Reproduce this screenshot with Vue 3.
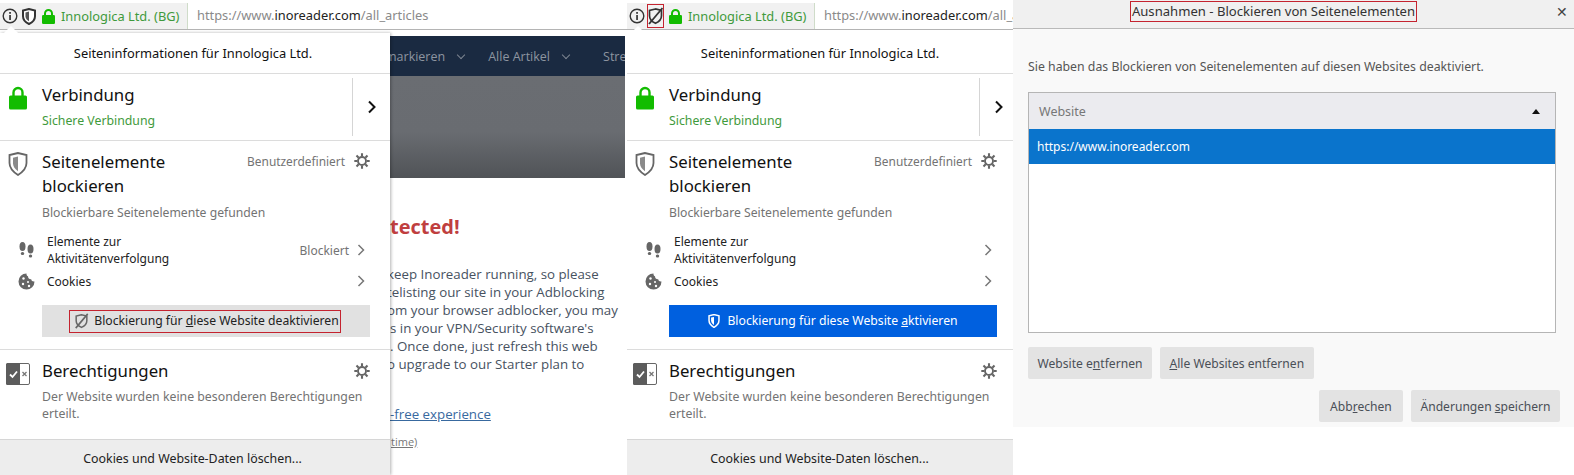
<template>
  <div class="shot">
    <div v-for="pane in panes" :key="pane.id" class="pane" :class="`pane--${pane.id}`">
      <div class="urlbar">
        <div class="identity">
          <svg class="ico-info" width="16" height="16" viewBox="0 0 16 16">
            <circle cx="8" cy="8" r="6.8" fill="none" stroke="#333" stroke-width="1.4" />
            <rect x="7.2" y="7" width="1.7" height="5" fill="#333" />
            <rect x="7.2" y="4" width="1.7" height="1.8" fill="#333" />
          </svg>
          <span class="shield-slot" :class="{ 'shield-slot--marked': !pane.blocking }">
            <svg v-if="pane.blocking" width="14" height="17" viewBox="0 0 14 17">
              <path d="M7 1 1 2.6v5.6c0 3.6 2.6 6.2 6 7.8 3.4-1.600 6-4.200 6-7.800V2.600L7 1Z" fill="#fff" stroke="#333" stroke-width="2" />
              <path d="M7 3.500 3.500 4.500v3.700c0 2.200 1.500 3.900 3.500 5V3.500Z" fill="#555" />
            </svg>
            <svg v-else width="15" height="18" viewBox="0 0 15 18">
              <path d="M7.500 2 1.500 3.500v5.200c0 3.500 2.600 6 6 7.500 3.400-1.500 6-4 6-7.500V3.500L7.500 2Z" fill="none" stroke="#333" stroke-width="1.700" />
              <path d="M14.500 1 1 17" stroke="#333" stroke-width="1.800" />
            </svg>
          </span>
          <svg class="ico-lock" width="13" height="15" viewBox="0 0 13 15">
            <path d="M3 7V4.500a3.500 3.500 0 0 1 7 0V7" fill="none" stroke="#12bc00" stroke-width="2" />
            <rect y="6" width="13" height="9" rx="1.200" fill="#12bc00" />
          </svg>
          <span class="identity__name">Innologica Ltd. (BG)</span>
        </div>
        <div class="url">https://www.<b>inoreader.com</b>/all_articles</div>
      </div>

      <div v-if="pane.id === 'a'" class="site">
        <nav class="site__nav">
          <span>markieren</span><i class="caret"></i>
          <span>Alle Artikel</span><i class="caret caret--last"></i>
          <span>Streams</span>
        </nav>
        <div class="site__hero"></div>
        <h2 class="site__title">tected!</h2>
        <p v-for="line in siteLines" :key="line.text" class="site__line" :style="{ marginLeft: line.x + 'px' }">{{ line.text }}</p>
        <a class="site__link">-free experience</a>
        <a class="site__small">time)</a>
      </div>

      <section class="popup">
        <header class="popup__head">Seiteninformationen für Innologica Ltd.</header>

        <div class="conn">
          <svg class="conn__lock" width="18" height="24" viewBox="0 0 18 24">
            <path d="M4.500 11V6.500a4.500 4.500 0 0 1 9 0V11" fill="none" stroke="#12bc00" stroke-width="2.400" />
            <rect y="9.500" width="18" height="14" rx="1.600" fill="#12bc00" />
          </svg>
          <div class="conn__text">
            <div class="title">Verbindung</div>
            <div class="conn__state">Sichere Verbindung</div>
          </div>
          <div class="conn__more">
            <svg width="10" height="14" viewBox="0 0 10 14"><path d="M2 1.500 7.500 7 2 12.500" fill="none" stroke="#111" stroke-width="2" /></svg>
          </div>
        </div>

        <div class="block">
          <div class="block__head">
            <svg class="block__shield" width="20" height="24" viewBox="0 0 20 24">
              <path d="M10 1 1.500 3v8c0 5 3.500 8.800 8.500 12 5-3.200 8.500-7 8.500-12V3L10 1Z" fill="none" stroke="#666" stroke-width="1.800" />
              <path d="M10 4.500 5 5.700v5.500c0 3.200 2 5.800 5 8V4.500Z" fill="#8a8a8a" />
            </svg>
            <div class="title block__title">Seitenelemente blockieren</div>
            <div class="block__meta">
              <span>Benutzerdefiniert</span>
              <svg class="gear" width="16" height="16" viewBox="0 0 16 16">
                <circle cx="8" cy="8" r="4" fill="none" stroke="#666" stroke-width="1.900" />
                <path d="M8 .3v3M8 12.700v3M.3 8h3M12.700 8h3M2.500 2.500l2.200 2.200M11.300 11.300l2.200 2.200M2.500 13.500l2.200-2.200M11.300 4.700l2.200-2.200" stroke="#666" stroke-width="2.100" />
              </svg>
            </div>
          </div>
          <div class="block__note">Blockierbare Seitenelemente gefunden</div>

          <div class="row row--tracking">
            <svg class="row__ico" width="16" height="17" viewBox="0 0 16 17">
              <g fill="#666">
                <ellipse cx="4" cy="4.500" rx="3" ry="4.500" /><rect x="2.300" y="10" width="3.400" height="3" rx="1.500" />
                <ellipse cx="12" cy="7" rx="3" ry="4.500" /><rect x="10.300" y="12.500" width="3.400" height="3" rx="1.500" />
              </g>
            </svg>
            <span class="row__label">Elemente zur Aktivitätenverfolgung</span>
            <span v-if="pane.blocking" class="row__state">Blockiert</span>
            <svg class="row__chev" width="8" height="12" viewBox="0 0 8 12"><path d="M1.500 1 6.500 6l-5 5" fill="none" stroke="#777" stroke-width="1.500" /></svg>
          </div>
          <div class="row row--cookies">
            <svg class="row__ico" width="17" height="17" viewBox="0 0 17 17">
              <path d="M8.500.5a8 8 0 1 0 8 8c-1.800.3-3-.6-3.300-2.200C11.300 6.500 10 5 10 3.200 9 3 8.300 1.800 8.500.5Z" fill="#666" />
              <g fill="#fff"><circle cx="5.500" cy="5.500" r="1.200" /><circle cx="5" cy="11" r="1.200" /><circle cx="10" cy="9" r="1" /><circle cx="11" cy="13" r="1.200" /></g>
            </svg>
            <span class="row__label">Cookies</span>
            <svg class="row__chev" width="8" height="12" viewBox="0 0 8 12"><path d="M1.500 1 6.500 6l-5 5" fill="none" stroke="#777" stroke-width="1.500" /></svg>
          </div>

          <button v-if="pane.blocking" class="toggle" type="button">
            <span class="toggle__mark">
              <svg width="15" height="16" viewBox="0 0 15 18">
                <path d="M7.500 2 1.500 3.500v5.200c0 3.500 2.600 6 6 7.500 3.400-1.500 6-4 6-7.500V3.500L7.500 2Z" fill="none" stroke="#666" stroke-width="1.700" />
                <path d="M14.500 1 1 17" stroke="#666" stroke-width="1.800" />
              </svg>
              <span>Blockierung für <u>d</u>iese Website deaktivieren</span>
            </span>
          </button>
          <button v-else class="toggle toggle--on" type="button">
            <svg width="12" height="14" viewBox="0 0 20 24">
              <path d="M10 1 1.500 3v8c0 5 3.500 8.800 8.500 12 5-3.200 8.500-7 8.500-12V3L10 1Z" fill="none" stroke="#fff" stroke-width="2.600" />
              <path d="M10 5v14c-3-2-5-4.600-5-7.800V6.200L10 5Z" fill="#fff" />
            </svg>
            <span>Blockierung für diese Website <u>a</u>ktivieren</span>
          </button>
        </div>

        <div class="perm">
          <svg class="perm__ico" width="24" height="22" viewBox="0 0 24 22">
            <rect x=".5" y=".5" width="23" height="21" rx="1.500" fill="#fff" stroke="#666" />
            <path d="M1.500 0H14v22H1.500A1.500 1.500 0 0 1 0 20.500v-19A1.500 1.500 0 0 1 1.500 0Z" fill="#5c5c5c" />
            <path d="M4 11.500 6.500 14 11 8.500" fill="none" stroke="#fff" stroke-width="1.800" />
            <path d="m16.500 9 4 4m0-4-4 4" stroke="#777" stroke-width="1.300" />
          </svg>
          <div class="perm__text">
            <div class="perm__head">
              <div class="title">Berechtigungen</div>
              <svg class="gear" width="16" height="16" viewBox="0 0 16 16">
                <circle cx="8" cy="8" r="4" fill="none" stroke="#666" stroke-width="1.900" />
                <path d="M8 .3v3M8 12.700v3M.3 8h3M12.700 8h3M2.500 2.500l2.200 2.200M11.300 11.300l2.200 2.200M2.500 13.500l2.200-2.200M11.300 4.700l2.200-2.200" stroke="#666" stroke-width="2.100" />
              </svg>
            </div>
            <div class="perm__note">Der Website wurden keine besonderen Berechtigungen erteilt.</div>
          </div>
        </div>

        <footer class="popup__foot">Cookies und Website-Daten löschen...</footer>
      </section>
    </div>

    <div class="dialog">
      <header class="dialog__head">
        <span class="dialog__title">Ausnahmen - Blockieren von Seitenelementen</span>
        <span class="dialog__close">✕</span>
      </header>
      <div class="dialog__body">
        <p class="dialog__intro">Sie haben das Blockieren von Seitenelementen auf diesen Websites deaktiviert.</p>
        <div class="list">
          <div class="list__head"><span>Website</span><i class="list__sort"></i></div>
          <div class="list__row">https://www.inoreader.com</div>
        </div>
        <div class="btns">
          <button type="button" class="btn">Website e<u>n</u>tfernen</button>
          <button type="button" class="btn"><u>A</u>lle Websites entfernen</button>
        </div>
        <div class="btns btns--end">
          <button type="button" class="btn">Abb<u>r</u>echen</button>
          <button type="button" class="btn">Änderungen <u>s</u>peichern</button>
        </div>
      </div>
    </div>
  </div>
</template>

<script setup>
const panes = [
  { id: 'a', blocking: true },
  { id: 'b', blocking: false },
];

// only the part of each line that shows beside the popup
const siteLines = [
  { text: 'keep Inoreader running, so please', x: -3 },
  { text: 'telisting our site in your Adblocking', x: -3 },
  { text: 'om your browser adblocker, you may', x: -3 },
  { text: 's in your VPN/Security software\'s', x: 0 },
  { text: '. Once done, just refresh this web', x: 0 },
  { text: 'o upgrade to our Starter plan to', x: -3 },
];
</script>

<style>
html, body { margin: 0; background: #fff; }
</style>

<style scoped>
.shot {
  display: flex;
  width: 1574px;
  height: 475px;
  overflow: hidden;
  background: #fff;
  font-family: "Noto Sans", "Open Sans", sans-serif;
  color: #111;
}
.pane {
  position: relative;
  flex: none;
  height: 475px;
  overflow: hidden;
}
.pane--a { width: 625px; }
.pane--b { width: 388px; }

.urlbar {
  display: flex;
  align-items: stretch;
  height: 30px;
  box-sizing: border-box;
  padding-top: 3px;
  border-bottom: 1px solid #b4b4b4;
  white-space: nowrap;
}
.pane--b .urlbar { padding-left: 2px; }
.identity {
  display: flex;
  align-items: center;
  width: 188px;
  flex: none;
  box-sizing: border-box;
  padding-left: 2px;
  background: #f1f1f1;
  border-right: 1px solid #cfdcc9;
}
.ico-info { flex: none; }
.shield-slot {
  display: flex;
  align-items: center;
  justify-content: center;
  box-sizing: border-box;
  width: 17px;
  height: 24px;
  margin-left: 2px;
}
.shield-slot--marked { border: 1px solid #c4232f; }
.ico-lock { margin-left: 5px; flex: none; }
.identity__name {
  margin-left: 6px;
  font-size: 12.850px;
  color: #3f9a3c;
}
.url {
  padding-left: 9px;
  font-size: 12.850px;
  line-height: 25px;
  color: #8a8a8a;
}
.url b { font-weight: 400; color: #222; }

.site {
  padding-left: 390px;
  font-family: "Open Sans", sans-serif;
  white-space: nowrap;
}
.site__nav {
  display: flex;
  align-items: center;
  height: 40px;
  margin-top: 6px;
  margin-left: -8px;
  padding-left: 3px;
  background: #1a2a41;
  font-size: 12.500px;
  color: #8d95a0;
}
.caret {
  flex: none;
  box-sizing: border-box;
  width: 6px;
  height: 6px;
  margin: 0 24px 3px 13px;
  border-right: 1.500px solid #7c8591;
  border-bottom: 1.500px solid #7c8591;
  transform: rotate(45deg);
}
.caret--last { margin-right: 34px; }
.site__hero {
  height: 102px;
  background: linear-gradient(#6a6d72 0%, #696c71 55%, #505357 100%);
}
.site__title {
  margin: 35px 0 24px;
  font-size: 20px;
  line-height: 28px;
  font-weight: 700;
  color: #c03f3f;
}
.site__line {
  margin: 0;
  font-size: 13.300px;
  line-height: 18px;
  color: #47525f;
}
.site__link {
  display: block;
  margin-top: 32px;
  font-size: 13.300px;
  line-height: 18px;
  color: #38699f;
  text-decoration: underline;
}
.site__small {
  display: block;
  margin-top: 11px;
  margin-left: 1px;
  font-size: 11px;
  line-height: 16px;
  color: #777;
  text-decoration: underline;
}

.popup {
  position: absolute;
  top: 33px;
  left: 0;
  display: flex;
  flex-direction: column;
  width: 390px;
  height: 442px;
  box-sizing: border-box;
  background: #fff;
  box-shadow: 1px 0 3px rgba(0, 0, 0, 0.3);
}
.pane--b .popup { width: 392px; padding-left: 2px; box-shadow: none; }
.popup::before {
  content: "";
  position: absolute;
  top: -5px;
  left: 6px;
  width: 10px;
  height: 10px;
  background: #fff;
  transform: rotate(45deg);
}
.pane--b .popup::before { left: 8px; }
.popup__head {
  height: 41px;
  box-sizing: border-box;
  padding: 11px 4px 0 0;
  border-bottom: 1px solid #dcdcdc;
  text-align: center;
  font-size: 12.850px;
  line-height: 19px;
}
.title {
  font-size: 16.800px;
  line-height: 24px;
}

.conn {
  display: flex;
  height: 67px;
  box-sizing: border-box;
  border-bottom: 1px solid #dcdcdc;
}
.conn__lock { flex: none; margin: 12px 0 0 9px; }
.conn__text { flex: 1; padding: 9px 0 0 15px; }
.conn__state {
  margin-top: 5px;
  font-size: 12.300px;
  line-height: 18px;
  color: #3f9a3c;
}
.conn__more {
  display: flex;
  align-items: center;
  justify-content: center;
  width: 37px;
  height: 58px;
  margin-top: 4px;
  border-left: 1px solid #d5d5d5;
}

.block {
  height: 209px;
  box-sizing: border-box;
  padding: 9px 20px 0 0;
  border-bottom: 1px solid #dcdcdc;
}
.block__head { display: flex; align-items: flex-start; }
.block__shield { flex: none; margin: 2px 14px 0 8px; }
.block__title { width: 145px; }
.block__meta {
  display: flex;
  align-items: center;
  gap: 9px;
  margin-left: auto;
  font-size: 11.900px;
  line-height: 22px;
  color: #737373;
}
.block__note {
  margin: 6px 0 0 42px;
  font-size: 12.200px;
  line-height: 18px;
  color: #737373;
}
.row {
  display: flex;
  align-items: center;
  padding-right: 5px;
  font-size: 12px;
  line-height: 17px;
  color: #222;
}
.row--tracking { margin-top: 11px; }
.row--cookies { margin-top: 5px; height: 18px; }
.row__ico { flex: none; width: 17px; margin-left: 18px; }
.row__label { flex: 0 1 138px; margin-left: 12px; }
.row__state { margin-left: auto; color: #737373; }
.row__chev { flex: none; margin-left: 8px; }
.row--cookies .row__chev, .row:not(:has(.row__state)) .row__chev { margin-left: auto; }
.toggle {
  display: flex;
  align-items: center;
  justify-content: center;
  gap: 7px;
  width: 328px;
  height: 32px;
  margin: 15px 0 0 42px;
  padding: 0;
  border: 0;
  background: #e1e1e1;
  font: 12.200px/18px "Noto Sans", "Open Sans", sans-serif;
  color: #222;
}
.toggle__mark {
  display: flex;
  align-items: center;
  gap: 5px;
  height: 21px;
  padding: 0 1px 0 4px;
  margin-right: 2px;
  border: 1px solid #c4232f;
}
.toggle--on { background: #0060df; color: #fff; }

.perm {
  display: flex;
  height: 90px;
  box-sizing: border-box;
  border-bottom: 1px solid #d6d6d6;
}
.perm__ico { flex: none; margin: 13px 0 0 6px; }
.perm__text { flex: 1; padding: 9px 20px 0 12px; }
.perm__head {
  display: flex;
  align-items: center;
  justify-content: space-between;
}
.perm__note {
  margin-top: 5px;
  font-size: 12.300px;
  line-height: 17px;
  color: #737373;
}
.popup__foot {
  flex: 1;
  background: #ededed;
  text-align: center;
  padding: 9px 5px 0 0;
  font-size: 12.400px;
  line-height: 20px;
  color: #222;
}

.dialog {
  flex: none;
  align-self: flex-start;
  position: relative;
  width: 561px;
  height: 427px;
  background: #f9f9f9;
}
.dialog__head {
  position: relative;
  display: flex;
  justify-content: center;
  height: 29px;
  box-sizing: border-box;
  padding: 1px 40px 0 0;
  background: #f0f0f0;
  border-bottom: 1px solid #b9b9b9;
}
.dialog__title {
  height: 19px;
  padding: 0 1px;
  border: 1px solid #c4232f;
  font-size: 13.100px;
  line-height: 18px;
  color: #333;
}
.dialog__close {
  position: absolute;
  top: 2px;
  right: 6px;
  font-size: 14px;
  color: #444;
}
.dialog__body { padding: 28px 18px 0 15px; }
.dialog__intro {
  margin: 0 0 15px;
  font-size: 12.300px;
  line-height: 20px;
  color: #555;
}
.list {
  width: 528px;
  height: 241px;
  box-sizing: border-box;
  background: #fff;
  border: 1px solid #b5b5b5;
  font-size: 12.500px;
}
.list__head {
  display: flex;
  align-items: center;
  justify-content: space-between;
  height: 36px;
  padding: 0 15px 0 10px;
  background: #ebebef;
  color: #777;
}
.list__sort {
  width: 0;
  height: 0;
  border: 4px solid transparent;
  border-top: 0;
  border-bottom: 5px solid #111;
}
.list__row {
  height: 35px;
  padding-left: 8px;
  background: #0a74cc;
  color: #fff;
  font-size: 12px;
  line-height: 36px;
}
.btns { display: flex; gap: 8px; margin-top: 14px; }
.btns--end { justify-content: flex-end; margin-top: 11px; margin-right: -4px; }
.btns--end .btn { min-width: 84px; }
.btn {
  height: 32px;
  padding: 0 9.500px;
  border: 0;
  border-radius: 2px;
  background: #e3e3e3;
  font: 12.100px "Noto Sans", "Open Sans", sans-serif;
  color: #4a4f57;
}
</style>
